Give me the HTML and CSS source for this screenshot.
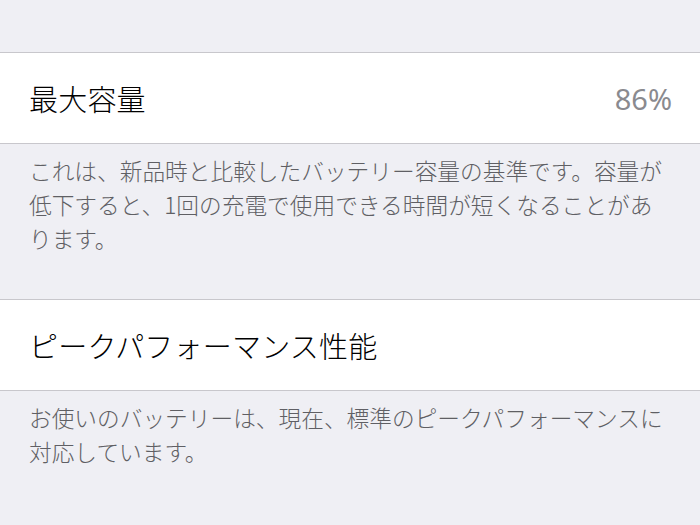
FILE: index.html
```html
<!DOCTYPE html>
<html lang="ja">
<head>
<meta charset="utf-8">
<link rel="stylesheet" href="styles.css">
</head>
<body>
<div class="page">
  <div class="group first">
    <div class="cell">
      <span class="label">最大容量</span>
      <span class="value">86%</span>
    </div>
    <p class="footer">これは、新品時と比較したバッテリー容量の基準です。容量が低下すると、1回の充電で使用できる時間が短くなることがあります。</p>
  </div>
  <div class="group second">
    <div class="cell">
      <span class="label">ピークパフォーマンス性能</span>
    </div>
    <p class="footer">お使いのバッテリーは、現在、標準のピークパフォーマンスに対応しています。</p>
  </div>
</div>
</body>
</html>
```

FILE: styles.css
```css
html, body {
  margin: 0;
  padding: 0;
  background: #efeff4;
}
body {
  font-family: "Noto Sans CJK JP", "Noto Sans", sans-serif;
  width: 700px;
  height: 525px;
  overflow: hidden;
}
.page {
  display: flex;
  flex-direction: column;
  padding-top: 52px;
}
.cell {
  height: 90px;
  background: #ffffff;
  border-top: 1px solid #c8c7cc;
  border-bottom: 1px solid #c8c7cc;
  display: flex;
  align-items: center;
  justify-content: space-between;
  padding: 0 28px 0 29px;
}
.label {
  font-size: 29px;
  font-weight: 300;
  color: #000000;
  letter-spacing: 0.2px;
}
.value {
  font-family: "Noto Sans", "Inter", sans-serif;
  font-size: 29px;
  font-weight: 400;
  color: #8a8a8f;
}
.footer {
  margin: 0;
  padding: 10px 29px 0 29px;
  font-size: 22.7px;
  font-weight: 300;
  line-height: 34px;
  color: #5f5f64;
}
.group.first .footer {
  height: 145px;
}
```
